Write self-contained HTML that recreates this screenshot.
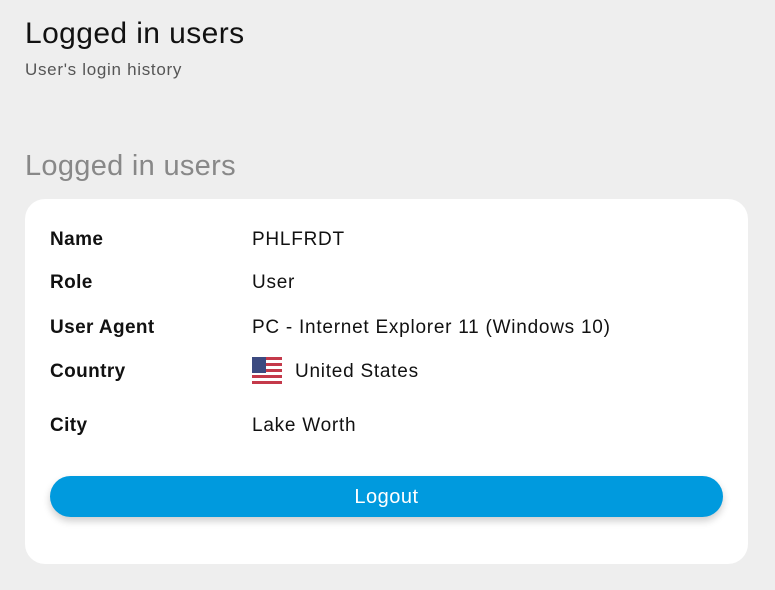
<!DOCTYPE html>
<html><head><style>
body{margin:0;width:775px;height:590px;background:#eeeeee;font-family:"Liberation Sans",sans-serif;position:relative;overflow:hidden}
.a{position:absolute;white-space:nowrap}
.card{position:absolute;left:25px;top:199px;width:723px;height:365px;background:#fff;border-radius:20px}
.l{font-weight:bold;font-size:19px;color:#111;left:50px;letter-spacing:0.4px}
.v{font-size:19px;color:#111;left:252px;letter-spacing:0.75px}
.btn{position:absolute;left:50px;top:476px;width:673px;height:41px;border-radius:21px;background:#009ade;color:#fff;font-size:20px;letter-spacing:0.5px;text-align:center;line-height:43px;box-shadow:0 4px 8px rgba(0,0,0,.2)}
</style></head><body>
<div class="a" style="left:25px;top:17px;font-size:30px;letter-spacing:0.4px;color:#111">Logged in users</div>
<div class="a" style="left:25px;top:60px;font-size:17px;letter-spacing:0.7px;color:#555">User's login history</div>
<div class="a" style="left:25px;top:150px;font-size:29px;color:#888;letter-spacing:0.3px">Logged in users</div>
<div class="card"></div>
<div class="a l" style="top:229px">Name</div><div class="a v" style="top:229px">PHLFRDT</div>
<div class="a l" style="top:272px">Role</div><div class="a v" style="top:272px">User</div>
<div class="a l" style="top:317px">User Agent</div><div class="a v" style="top:317px">PC - Internet Explorer 11 (Windows 10)</div>
<div class="a l" style="top:361px">Country</div>
<svg class="a" style="left:252px;top:357px" width="30" height="30" viewBox="0 0 30 30">
<g fill="#c4394a"><rect y="0" width="30" height="3"/><rect y="6" width="30" height="3"/><rect y="12" width="30" height="3"/><rect y="18" width="30" height="3"/><rect y="24" width="30" height="3"/></g>
<g fill="#fff"><rect y="3" width="30" height="3"/><rect y="9" width="30" height="3"/><rect y="15" width="30" height="3"/><rect y="21" width="30" height="3"/><rect y="27" width="30" height="3"/></g>
<rect width="14" height="16" fill="#3c4a80"/>
</svg>
<div class="a v" style="left:295px;top:361px">United States</div>
<div class="a l" style="top:415px">City</div><div class="a v" style="top:415px">Lake Worth</div>
<div class="btn">Logout</div>
</body></html>
